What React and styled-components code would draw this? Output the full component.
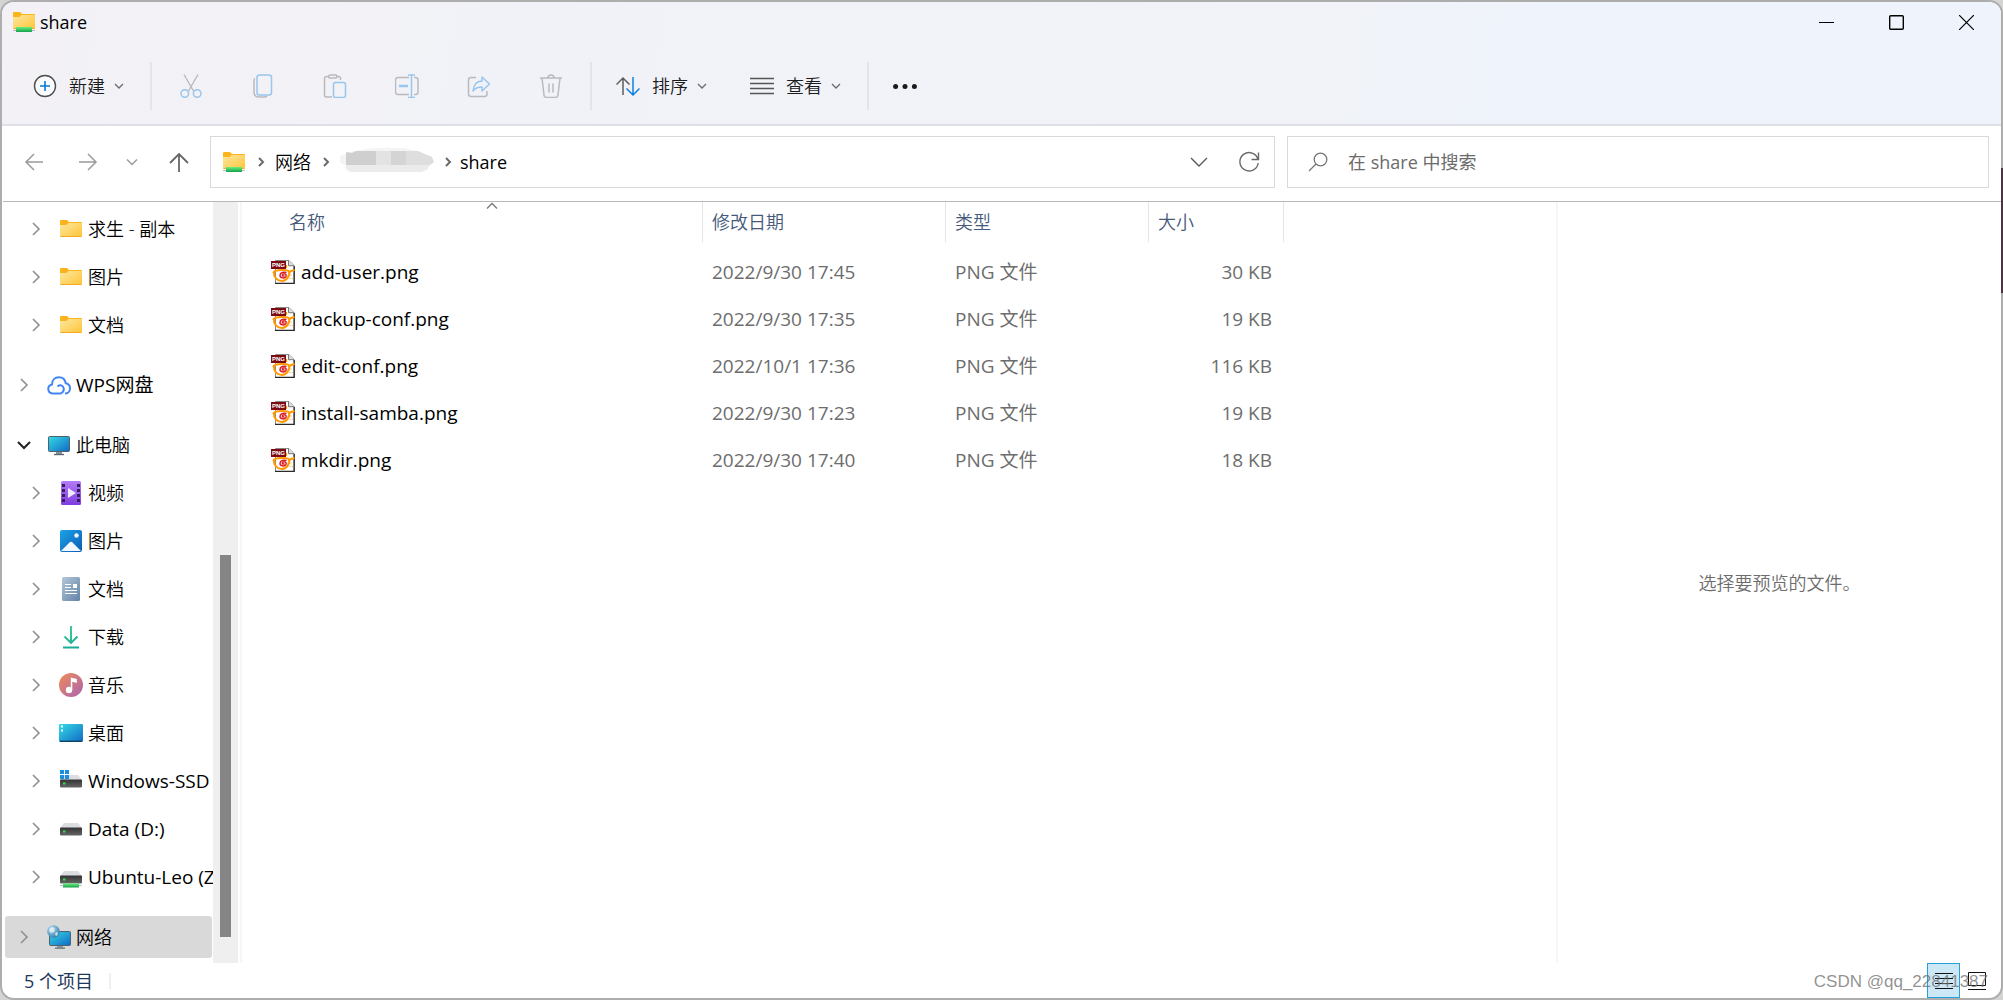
import React from "react";
import styled, { createGlobalStyle, css } from "styled-components";

const GlobalStyle = createGlobalStyle`
  *, *::before, *::after { box-sizing: border-box; }
  body {
    margin: 0;
    background: #d4d4d2;
    color: #000;
    font-family: "Open Sans", "Noto Sans CJK SC", sans-serif;
    font-size: 18px;
    line-height: 24px;
  }
  button, input { font: inherit; color: inherit; }
  ul, ol { list-style: none; margin: 0; padding: 0; }
  svg { display: block; flex: none; }
`;

const plainButton = css`
  display: flex;
  align-items: center;
  border: 0;
  padding: 0;
  background: transparent;
  white-space: nowrap;
  cursor: default;
`;

const Desktop = styled.div`
  position: relative;
`;

const Window = styled.div`
  position: relative;
  display: flex;
  flex-direction: column;
  min-height: 100vh;
  border: 2px solid #adadad;
  border-radius: 14px;
  background: #fff;
  overflow: hidden;
`;

const Chrome = styled.header`
  background: linear-gradient(100deg, #f3f1f6 0%, #f1f2f7 25%, #f1f3f8 65%, #eff3fb 76%);
  border-bottom: 2px solid #dfe0e6;
`;

const TitleBar = styled.div`
  display: flex;
  align-items: center;
  justify-content: space-between;
  height: 40px;
  padding-left: 10px;
`;

const Title = styled.h1`
  display: flex;
  align-items: center;
  gap: 4px;
  margin: 0;
  font-size: 18px;
  font-weight: 400;
`;

const WindowButtons = styled.div`
  display: flex;
  align-self: stretch;
`;

const WindowButton = styled.button`
  ${plainButton}
  width: 70px;
  justify-content: center;
`;

const Toolbar = styled.div`
  display: flex;
  align-items: center;
  height: 82px;
  padding: 6px 19px 0;
`;

const Command = styled.button`
  ${plainButton}
  height: 48px;
  padding: 0 12px;
  gap: 12px;
  color: #1b1b1b;
`;

const CommandLabel = styled.span`
  display: flex;
  align-items: center;
  gap: 7px;
  font-weight: 350;
`;

const IconGroup = styled.div`
  display: flex;
  gap: 24px;
  padding: 0 3px;
`;

const MenuGroup = styled.div`
  display: flex;
  gap: 17px;
`;

const IconCommand = styled.button`
  ${plainButton}
  width: 48px;
  height: 48px;
  justify-content: center;
`;

const Separator = styled.span`
  width: 2px;
  height: 48px;
  margin: 0 12px;
  background: #e3e3e9;
`;

const Navigation = styled.div`
  display: flex;
  align-items: center;
  height: 76px;
  margin-left: 1px;
  padding: 0 12px 3px 10px;
  border-bottom: 1px solid #b9b9b9;
`;

const History = styled.div`
  display: flex;
  gap: 12px;
  width: 197px;
`;

const HistoryButton = styled.button`
  ${plainButton}
  width: ${(p) => p.$width || 42}px;
  height: 42px;
  justify-content: center;
`;

const Address = styled.div`
  flex: 1;
  display: flex;
  align-items: center;
  justify-content: space-between;
  height: 52px;
  padding: 0 11px;
  border: 1px solid #d9d9d9;
`;

const Crumbs = styled.ol`
  display: flex;
  align-items: center;
`;

const Crumb = styled.li`
  display: flex;
  align-items: center;
`;

const CrumbButton = styled.button`
  ${plainButton}
  font-weight: 350;
`;

const CrumbText = styled(CrumbButton)`
  font-weight: 400;
`;

const CrumbArrow = styled.span`
  display: flex;
  justify-content: center;
  width: ${(p) => p.$width || 29}px;
`;

const AddressTools = styled.div`
  display: flex;
  gap: 22px;
`;

const AddressTool = styled.button`
  ${plainButton}
  width: 28px;
  height: 28px;
  justify-content: center;
`;

const Search = styled.label`
  display: flex;
  align-items: center;
  gap: 20px;
  flex: 0 1 702px;
  height: 52px;
  margin-left: 12px;
  padding: 0 20px;
  border: 1px solid #d9d9d9;
`;

const SearchInput = styled.input`
  flex: 1;
  min-width: 0;
  height: 30px;
  border: 0;
  padding: 0;
  outline: 0;
  background: transparent;
  font-weight: 400;
  &::placeholder { color: #6b6b6b; opacity: 1; }
`;

const Body = styled.div`
  flex: 1;
  display: grid;
  grid-template-columns: 211px 25px minmax(0, 1fr) minmax(200px, 445px);
`;

const Sidebar = styled.nav`
  padding: 3px 1px 1px 3px;
`;

const TreeItem = styled.li`
  padding: 3px 0;
  margin-top: ${(p) => (p.$root && !p.$first ? 12 : 0)}px;
`;

const TreeButton = styled.button`
  ${plainButton}
  width: 100%;
  height: 42px;
  padding-left: ${(p) => (p.$root ? 10 : 22)}px;
  border-radius: 3px;
  background: ${(p) => (p.$selected ? "#d9d9d9" : "transparent")};
  font-size: ${(p) => (p.$latin ? 19 : 18)}px;
  font-weight: ${(p) => (p.$latin ? 400 : 350)};
`;

const TreeIcon = styled.span`
  display: flex;
  margin: 0 5px 0 14px;
`;

const Track = styled.div`
  display: flex;
  flex-direction: column;
  justify-content: flex-end;
  padding: 0 7px 26px;
  background: #efefef;
`;

const Thumb = styled.div`
  width: 11px;
  height: 52%;
  background: #858585;
`;

const Files = styled.main`
  margin-left: 2px;
  border-left: 2px solid #f6f6f6;
`;

const Table = styled.table`
  border-spacing: 0;
  table-layout: fixed;
  width: 1042px;
  max-width: 100%;
`;

const HeadCell = styled.th`
  width: ${(p) => p.$width}px;
  padding: 0 0 6px;
  text-align: left;
  font-weight: 350;
  color: #45597a;
`;

const HeadBox = styled.div`
  position: relative;
  height: 40px;
  padding-left: ${(p) => p.$indent || 9}px;
  line-height: 40px;
  border-right: 1px solid #e5e5e5;
`;

const SortMark = styled.span`
  position: absolute;
  top: -2px;
  left: calc(50% + 14px);
`;

const Cell = styled.td`
  height: 47px;
  padding: 0 12px 0 9px;
  color: #6d6d6d;
  font-size: 19px;
  white-space: nowrap;
  text-align: ${(p) => (p.$end ? "right" : "left")};
`;

const NameCell = styled(Cell)`
  padding-left: 29px;
  color: #000;
`;

const FileName = styled.span`
  display: flex;
  align-items: center;
  gap: 6px;
`;

const Preview = styled.aside`
  display: flex;
  align-items: center;
  justify-content: center;
  border-left: 2px solid #f6f6f6;
  color: #6d6d6d;
  font-weight: 350;
`;

const StatusBar = styled.footer`
  display: flex;
  align-items: center;
  justify-content: space-between;
  height: 35px;
  padding: 0 8px 0 22px;
`;

const Count = styled.span`
  padding-right: 16px;
  border-right: 2px solid #efefef;
  line-height: 16px;
  color: #1e395b;
`;

const Views = styled.div`
  display: flex;
  align-self: stretch;
`;

const ViewButton = styled.button`
  ${plainButton}
  width: 33px;
  justify-content: center;
  border: 1px solid ${(p) => (p.$active ? "#26a0da" : "transparent")};
  background: ${(p) => (p.$active ? "#cce8f6" : "transparent")};
`;

const Watermark = styled.span`
  position: absolute;
  right: 13px;
  bottom: 4px;
  color: rgba(110, 110, 110, 0.75);
  font-family: "Liberation Sans", Arial, sans-serif;
  font-size: 17px;
  pointer-events: none;
`;

const DesktopEdge = styled.span`
  position: absolute;
  top: 16.8vh;
  right: 0;
  width: 2px;
  height: 12.5vh;
  background: #4a3540;
`;

/* ---------- icons ---------- */

const Svg = ({ w = 24, h = w, box, children, ...rest }) => (
  <svg width={w} height={h} viewBox={box || `0 0 ${w} ${h}`} fill="none" aria-hidden="true" {...rest}>
    {children}
  </svg>
);

const HiddenSvg = styled.svg`
  position: absolute;
`;

const Gradients = () => (
  <HiddenSvg width="0" height="0" aria-hidden="true">
    <defs>
      <linearGradient id="folder" x1="0" y1="0" x2="1" y2="1">
        <stop offset="0" stopColor="#fee7a1" />
        <stop offset="1" stopColor="#fdc536" />
      </linearGradient>
      <linearGradient id="screen" x1="0" y1="0" x2="1" y2="1">
        <stop offset="0" stopColor="#35dbe6" />
        <stop offset="1" stopColor="#1069c4" />
      </linearGradient>
      <linearGradient id="photo" x1="0" y1="0" x2="1" y2="1">
        <stop offset="0" stopColor="#1ba3e8" />
        <stop offset="1" stopColor="#0c5cb4" />
      </linearGradient>
      <linearGradient id="film" x1="0" y1="0" x2="0" y2="1">
        <stop offset="0" stopColor="#b57bf5" />
        <stop offset="1" stopColor="#7f3be0" />
      </linearGradient>
      <linearGradient id="paper" x1="0" y1="0" x2="1" y2="1">
        <stop offset="0" stopColor="#b4c8da" />
        <stop offset="1" stopColor="#6283a6" />
      </linearGradient>
      <linearGradient id="music" x1="0" y1="0" x2="1" y2="1">
        <stop offset="0" stopColor="#f28c55" />
        <stop offset="1" stopColor="#a863b4" />
      </linearGradient>
      <linearGradient id="green" x1="0" y1="0" x2="0" y2="1">
        <stop offset="0" stopColor="#6bf07c" />
        <stop offset="1" stopColor="#15a04c" />
      </linearGradient>
      <linearGradient id="down" gradientUnits="userSpaceOnUse" x1="4" y1="0" x2="20" y2="24">
        <stop offset="0" stopColor="#3fd08a" />
        <stop offset="1" stopColor="#0fa59a" />
      </linearGradient>
      <linearGradient id="drive" x1="0" y1="0" x2="0" y2="1">
        <stop offset="0" stopColor="#333" />
        <stop offset="1" stopColor="#666" />
      </linearGradient>
      <radialGradient id="globe" cx="0.35" cy="0.3" r="0.8">
        <stop offset="0" stopColor="#b9dff0" />
        <stop offset="1" stopColor="#2a77a8" />
      </radialGradient>
    </defs>
  </HiddenSvg>
);

const FolderShape = () => (
  <>
    <path d="M1 2a1 1 0 0 1 1-1h6l2 2h12a1 1 0 0 1 1 1v3H1z" fill="#fbb41a" />
    <path d="M1 6h6.500l2-2H22a1 1 0 0 1 1 1v12a1 1 0 0 1-1 1H2a1 1 0 0 1-1-1z" fill="url(#folder)" />
    <path d="M1.500 17.500h21" stroke="#f0ab22" />
  </>
);
const Folder = () => <Svg w={24} h={20}><FolderShape /></Svg>;
const SharedFolder = () => (
  <Svg w={24} h={22}>
    <FolderShape />
    <path d="M1 19.500h22" stroke="#b9b9bd" />
    <path d="M4 16h16v5H4z" fill="url(#green)" />
  </Svg>
);

const Chevron = ({ dir = "down", w = 14, color = "#6a6a6a", size = 4, sw = 1.3 }) => {
  const c = w / 2;
  const s = size;
  const d = {
    down: `M${c - s} ${c - s / 2}l${s} ${s} ${s} ${-s}`,
    up: `M${c - s} ${c + s / 2}l${s} ${-s} ${s} ${s}`,
    right: `M${c - s / 2} ${c - s}l${s} ${s} ${-s} ${s}`,
  }[dir];
  return <Svg w={w}><path d={d} stroke={color} strokeWidth={sw} /></Svg>;
};

const NewIcon = () => (
  <Svg>
    <circle cx="12" cy="12" r="10.500" fill="#f9fafc" stroke="#4e4e4e" strokeWidth="1.400" />
    <path d="M12 7v10M7 12h10" stroke="#0a78d4" strokeWidth="1.600" />
  </Svg>
);
const G = "#b9b9be";
const B = "#98c6ec";
const CutIcon = () => (
  <Svg>
    <path d="M5 0.500l9.500 16.500M19 0.500L9.500 17" stroke={G} strokeWidth="1.400" />
    <circle cx="5.800" cy="19.500" r="3.800" stroke={B} strokeWidth="1.500" />
    <circle cx="18.200" cy="19.500" r="3.800" stroke={B} strokeWidth="1.500" />
  </Svg>
);
const CopyIcon = () => (
  <Svg>
    <path d="M4 4.500C3 5 3 6 3 7v11c0 3.500 1.500 5 5 5h5c1.500 0 2.500-.3 3-1" stroke={G} strokeWidth="1.500" />
    <rect x="6" y="1" width="14.500" height="20" rx="2.500" stroke={B} strokeWidth="1.500" />
  </Svg>
);
const PasteIcon = () => (
  <Svg>
    <path d="M6 2.500H3.500a2 2 0 0 0-2 2V21a2 2 0 0 0 2 2H9M13 2.500h2.500a2 2 0 0 1 2 2V6" stroke={G} strokeWidth="1.500" />
    <rect x="5.500" y="1" width="8.500" height="3" rx="1.500" stroke={G} strokeWidth="1.400" />
    <rect x="10.500" y="8.500" width="12" height="15" rx="2" stroke={B} strokeWidth="1.500" />
  </Svg>
);
const RenameIcon = () => (
  <Svg>
    <path d="M14 3.500H3a2.500 2.500 0 0 0-2.500 2.500v12A2.500 2.500 0 0 0 3 20.500h11M19 3.500h1.500A2.500 2.500 0 0 1 23 6v12a2.500 2.500 0 0 1-2.500 2.500H19" stroke={G} strokeWidth="1.500" />
    <path d="M4 12h9" stroke={B} strokeWidth="2.400" />
    <path d="M16.500 1v22.500M13 1h7M13 23.500h7" stroke={B} strokeWidth="1.500" />
  </Svg>
);
const ShareIcon = () => (
  <Svg>
    <path d="M9 3.500H4A2.500 2.500 0 0 0 1.500 6v14A2.500 2.500 0 0 0 4 22.500h13.500A2.500 2.500 0 0 0 20 20v-3" stroke={G} strokeWidth="1.500" />
    <path d="M15 3l7.500 7-7.500 7v-4c-4.500 0-7 1.200-9 4C6.500 11 9.500 7.300 15 7z" stroke={B} strokeWidth="1.500" strokeLinejoin="round" />
  </Svg>
);
const TrashIcon = () => (
  <Svg>
    <path d="M1 4h22M9 4c0-4 6-4 6 0M3 4l2 17a2.500 2.500 0 0 0 2.500 2.500h9A2.500 2.500 0 0 0 19 21l2-17M10 9.500v9M14 9.500v9" stroke={G} strokeWidth="1.500" />
  </Svg>
);
const SortIcon = () => (
  <Svg>
    <path d="M7 21V4M.5 10.500L7 4l6.500 6.500" stroke="#5c5c5c" strokeWidth="1.500" />
    <path d="M17 3v18M10.500 14.500L17 21l6.500-6.500" stroke="#0f7fdc" strokeWidth="1.500" />
  </Svg>
);
const ViewIcon = () => (
  <Svg>
    <path d="M0 4.500h24M0 9.500h24M0 14.500h24M0 19.500h24" stroke="#555" strokeWidth="1.300" />
  </Svg>
);
const MoreIcon = () => (
  <Svg>
    <g fill="#1b1b1b">
      <circle cx="2.600" cy="12.500" r="2.500" />
      <circle cx="12" cy="12.500" r="2.500" />
      <circle cx="21.400" cy="12.500" r="2.500" />
    </g>
  </Svg>
);
const ArrowLeft = () => <Svg w={20}><path d="M19 10H2M10 2L2 10l8 8" stroke="#9b9b9b" strokeWidth="1.500" /></Svg>;
const ArrowRight = () => <Svg w={20}><path d="M1 10h17M10 2l8 8-8 8" stroke="#9b9b9b" strokeWidth="1.500" /></Svg>;
const ArrowUp = () => <Svg w={20}><path d="M10 20V2M1 11l9-9 9 9" stroke="#666" strokeWidth="1.800" /></Svg>;
const RefreshIcon = () => (
  <Svg w={22}>
    <path d="M20 8.500A9.200 9.200 0 1 0 20.200 12M20.500 1.500v7h-7" stroke="#6a6a6a" strokeWidth="1.400" />
  </Svg>
);
const SearchIcon = () => (
  <Svg w={20}>
    <circle cx="12.500" cy="7.500" r="6.300" stroke="#777" strokeWidth="1.300" />
    <path d="M8 12L1 19" stroke="#777" strokeWidth="1.300" />
  </Svg>
);

const CloudIcon = () => (
  <Svg>
    <path d="M14 20.500H5.500a4.600 4.600 0 0 1-.5-9.100C5 7 8 4.200 11.800 4.200c3.600 0 6.400 2.400 6.900 6 2.600.5 4.300 2.500 4.300 5 0 3-2.200 5.300-5 5.300" stroke="#4285f4" strokeWidth="2" />
    <path d="M10.500 13.500c3-2.500 6.300-.8 6.300 2.500 0 2-1 3.500-2.800 4.500" stroke="#4285f4" strokeWidth="2" />
  </Svg>
);
const PcIcon = () => (
  <Svg>
    <rect x="1.500" y="3.500" width="21" height="15" rx="1" fill="url(#screen)" stroke="#52606c" />
    <path d="M9 19h6v2H9z" fill="#8c959e" />
    <path d="M7 21.500h10" stroke="#5b6670" strokeWidth="1.400" />
  </Svg>
);
const FilmIcon = () => (
  <Svg>
    <rect x="2" width="20" height="24" rx="1.500" fill="url(#film)" />
    <path d="M4.500 3v19M19.500 3v19" stroke="#33215e" strokeWidth="3" strokeDasharray="3 2" />
    <path d="M9 7l8 5-8 5z" fill="#f1eafc" />
  </Svg>
);
const PhotoIcon = () => (
  <Svg>
    <rect x="1" y="1" width="22" height="22" rx="2" fill="url(#photo)" />
    <path d="M2 22l8.500-8.500c1-1 2-1 3 0L22 22z" fill="#f2f8fe" />
    <circle cx="17.500" cy="6.500" r="2.200" fill="#f2f8fe" />
  </Svg>
);
const PaperIcon = () => (
  <Svg>
    <rect x="3" width="18" height="24" rx="1.500" fill="url(#paper)" />
    <path d="M6 7.500h6M6 10.500h6M6 13.500h12M6 16.500h12" stroke="#fff" strokeWidth="1.100" />
    <path d="M14 7h4v4h-4z" fill="#fff" />
  </Svg>
);
const DownIcon = () => (
  <Svg>
    <path d="M12 1v17M5.500 11.500L12 18l6.500-6.500M4 22.500h16" stroke="url(#down)" strokeWidth="1.900" />
  </Svg>
);
const MusicIcon = () => (
  <Svg>
    <circle cx="12" cy="12" r="12" fill="url(#music)" />
    <circle cx="10" cy="17" r="3.200" fill="#fff" />
    <path d="M11.800 17V4.500l6 1.500v4l-4.500-1.200V17z" fill="#fff" />
  </Svg>
);
const DesktopIcon = () => (
  <Svg>
    <rect y="3" width="24" height="18" rx="1.200" fill="url(#screen)" />
    <path d="M2 5.500h2M2 9.500h2" stroke="#e6fbff" strokeWidth="1.800" />
    <path d="M1 20.300h22" stroke="#123f66" strokeWidth="1.400" />
  </Svg>
);
const DriveShape = () => (
  <>
    <path d="M5 6h14l4 5H1z" fill="#dcdde1" />
    <rect x="1" y="10.500" width="22" height="8" rx="1" fill="url(#drive)" />
    <path d="M4 13.500h2.500v2H4z" fill="#2fe04a" />
  </>
);
const WinDriveIcon = () => (
  <Svg>
    <DriveShape />
    <path d="M1 1h4v4H1zM6 1h4v4H6zM1 6h4v4H1zM6 6h4v4H6z" fill="#1a8fe0" />
  </Svg>
);
const DriveIcon = () => <Svg><DriveShape /></Svg>;
const NetDriveIcon = () => (
  <Svg>
    <DriveShape />
    <path d="M1 20.500h22" stroke="#bdbdbd" />
    <path d="M4 18.500h16V22.500H4z" fill="url(#green)" />
  </Svg>
);
const NetworkIcon = () => (
  <Svg>
    <rect x="2.500" y="6.500" width="21" height="14" rx="1" fill="url(#screen)" stroke="#52606c" />
    <path d="M10 21h6v1.500h-6z" fill="#8c959e" />
    <path d="M8 23.200h10" stroke="#5b6670" strokeWidth="1.300" />
    <circle cx="6.500" cy="6.500" r="6.300" fill="url(#globe)" />
    <path d="M3 3l3-1 2 2-1 3-3 1-2-2zM9 7l2 1-1 3-2-1z" fill="#e5f3f6" opacity=".8" />
  </Svg>
);
const PngIcon = () => (
  <Svg>
    <path d="M4.500.5H18l5 5v18H4.500z" fill="#fff" stroke="#8a8a8a" />
    <path d="M23.200 6v17.500H4" stroke="#2a2a2a" strokeWidth="1.300" />
    <path d="M17.500.5v5.200H23" fill="#ddd" stroke="#777" />
    <path d="M3 12c1-2.200 14-2.800 15-.5 1.300 3-2 9.500-7 9.500S2.500 17 3 12z" stroke="#ff9900" strokeWidth="2" />
    <path d="M2 11.500l2 2M18 12l5.500-2.200M15 8V5" stroke="#ff9900" strokeWidth="2.200" />
    <path d="M20 14.500v1M19 18v1M21.500 18v1" stroke="#ffb84d" strokeWidth="1.300" />
    <path d="M15.500 12.500c-3-.8-6.500 0-6.500 3 0 2.500 4.500 3.500 6 .8 1-2-1.500-3-3-2.200-1.500 1 0 2.500 1.500 1.500" stroke="#dc1e28" strokeWidth="1.500" />
    <rect y="1" width="15" height="8" fill="#7c0a10" />
    <text x="7.500" y="7.300" textAnchor="middle" fill="#fff" fontFamily="Liberation Sans" fontWeight="700" fontSize="6">PNG</text>
  </Svg>
);

/* Pixelated smear hiding the host name in the address bar. */
const Redacted = () => (
  <Svg w={96} h={30} box="6 3 96 30" role="img" aria-label="已隐藏的主机名">
    <path d="M6 12c12-5 20-7 40-8 18-1 30 0 38 4 6 3 14 6 12 12-2 6-8 7-20 8H16c-4-1-5-4-5-7-4-1-8-5-5-9z" fill="#f4f4f4" />
    <path d="M12 8l6 1 4-2h20v14H12z" fill="#cfcfcf" />
    <path d="M42 7h15v14H42z" fill="#e3e3e3" />
    <path d="M57 7h15v14H57z" fill="#d4d4d4" />
    <path d="M72 7h12l14 6 2 5-4 3H72z" fill="#dedede" />
    <path d="M12 21h84l-3 5-6 2H17l-5-4z" fill="#ebebeb" />
  </Svg>
);

/* ---------- data ---------- */

const tree = [
  { label: "求生 - 副本", Icon: Folder },
  { label: "图片", Icon: Folder },
  { label: "文档", Icon: Folder },
  { label: "WPS网盘", Icon: CloudIcon, root: true, latin: true },
  { label: "此电脑", Icon: PcIcon, root: true, open: true },
  { label: "视频", Icon: FilmIcon },
  { label: "图片", Icon: PhotoIcon },
  { label: "文档", Icon: PaperIcon },
  { label: "下载", Icon: DownIcon },
  { label: "音乐", Icon: MusicIcon },
  { label: "桌面", Icon: DesktopIcon },
  { label: "Windows-SSD", Icon: WinDriveIcon, latin: true },
  { label: "Data (D:)", Icon: DriveIcon, latin: true },
  { label: "Ubuntu-Leo (Z", Icon: NetDriveIcon, latin: true },
  { label: "网络", Icon: NetworkIcon, root: true, selected: true },
];

const files = [
  ["add-user.png", "2022/9/30 17:45", "30 KB"],
  ["backup-conf.png", "2022/9/30 17:35", "19 KB"],
  ["edit-conf.png", "2022/10/1 17:36", "116 KB"],
  ["install-samba.png", "2022/9/30 17:23", "19 KB"],
  ["mkdir.png", "2022/9/30 17:40", "18 KB"],
];

const editCommands = [
  ["剪切", CutIcon],
  ["复制", CopyIcon],
  ["粘贴", PasteIcon],
  ["重命名", RenameIcon],
  ["共享", ShareIcon],
  ["删除", TrashIcon],
];

const MenuCommand = ({ label, Icon }) => (
  <Command type="button">
    <Icon />
    <CommandLabel>
      {label}
      <Chevron />
    </CommandLabel>
  </Command>
);

export default function App() {
  return (
    <Desktop>
      <GlobalStyle />
      <Gradients />
      <Window>
        <Chrome>
          <TitleBar>
            <Title>
              <SharedFolder />
              share
            </Title>
            <WindowButtons>
              <WindowButton type="button" aria-label="最小化">
                <Svg w={15}><path d="M0 7.500h15" stroke="#000" /></Svg>
              </WindowButton>
              <WindowButton type="button" aria-label="最大化">
                <Svg w={15}><rect x="0.700" y="0.700" width="13.600" height="13.600" rx="1" stroke="#000" strokeWidth="1.400" /></Svg>
              </WindowButton>
              <WindowButton type="button" aria-label="关闭">
                <Svg w={15}><path d="M0 0l15 15M15 0L0 15" stroke="#000" strokeWidth="1.200" /></Svg>
              </WindowButton>
            </WindowButtons>
          </TitleBar>
          <Toolbar>
            <MenuCommand label="新建" Icon={NewIcon} />
            <Separator />
            <IconGroup>
              {editCommands.map(([name, Icon]) => (
                <IconCommand key={name} type="button" aria-label={name}>
                  <Icon />
                </IconCommand>
              ))}
            </IconGroup>
            <Separator />
            <MenuGroup>
              <MenuCommand label="排序" Icon={SortIcon} />
              <MenuCommand label="查看" Icon={ViewIcon} />
            </MenuGroup>
            <Separator />
            <IconCommand type="button" aria-label="查看更多">
              <MoreIcon />
            </IconCommand>
          </Toolbar>
        </Chrome>

        <Navigation>
          <History>
            <HistoryButton type="button" aria-label="后退"><ArrowLeft /></HistoryButton>
            <HistoryButton type="button" aria-label="前进"><ArrowRight /></HistoryButton>
            <HistoryButton type="button" aria-label="最近位置" $width={22}>
              <Chevron color="#9b9b9b" size={5} sw={1.5} />
            </HistoryButton>
            <HistoryButton type="button" aria-label="上移" $width={48}><ArrowUp /></HistoryButton>
          </History>
          <Address>
            <Crumbs>
              <Crumb>
                <SharedFolder />
                <CrumbArrow><Chevron dir="right" size={4} sw={2} /></CrumbArrow>
                <CrumbButton type="button">网络</CrumbButton>
                <CrumbArrow><Chevron dir="right" size={4} sw={2} /></CrumbArrow>
              </Crumb>
              <Crumb>
                <Redacted />
                <CrumbArrow $width={24}><Chevron dir="right" size={4} sw={2} /></CrumbArrow>
              </Crumb>
              <Crumb>
                <CrumbText type="button">share</CrumbText>
              </Crumb>
            </Crumbs>
            <AddressTools>
              <AddressTool type="button" aria-label="以前的位置">
                <Chevron w={20} size={8} color="#5a5a5a" sw={1.4} />
              </AddressTool>
              <AddressTool type="button" aria-label="刷新"><RefreshIcon /></AddressTool>
            </AddressTools>
          </Address>
          <Search>
            <SearchIcon />
            <SearchInput type="search" aria-label="搜索" placeholder="在 share 中搜索" />
          </Search>
        </Navigation>

        <Body>
          <Sidebar aria-label="导航窗格">
            <ul>
              {tree.map(({ label, Icon, root, open, selected, latin }, i) => (
                <TreeItem key={i} $root={root} $first={i === 0}>
                  <TreeButton type="button" $root={root} $selected={selected} $latin={latin}>
                    <Chevron
                      dir={open ? "down" : "right"}
                      w={18}
                      size={6}
                      color={open ? "#222" : "#8f8f8f"}
                      sw={open ? 2 : 1.6}
                    />
                    <TreeIcon><Icon /></TreeIcon>
                    {label}
                  </TreeButton>
                </TreeItem>
              ))}
            </ul>
          </Sidebar>
          <Track><Thumb /></Track>
          <Files>
            <Table>
              <thead>
                <tr>
                  <HeadCell $width={461} scope="col">
                    <HeadBox $indent={47}>
                      名称
                      <SortMark><Chevron dir="up" w={12} size={5} color="#777" /></SortMark>
                    </HeadBox>
                  </HeadCell>
                  <HeadCell $width={243} scope="col"><HeadBox>修改日期</HeadBox></HeadCell>
                  <HeadCell $width={203} scope="col"><HeadBox>类型</HeadBox></HeadCell>
                  <HeadCell $width={135} scope="col"><HeadBox>大小</HeadBox></HeadCell>
                </tr>
              </thead>
              <tbody>
                {files.map(([name, date, size]) => (
                  <tr key={name}>
                    <NameCell>
                      <FileName><PngIcon />{name}</FileName>
                    </NameCell>
                    <Cell>{date}</Cell>
                    <Cell>PNG 文件</Cell>
                    <Cell $end>{size}</Cell>
                  </tr>
                ))}
              </tbody>
            </Table>
          </Files>
          <Preview>选择要预览的文件。</Preview>
        </Body>

        <StatusBar>
          <Count>5 个项目</Count>
          <Views>
            <ViewButton type="button" aria-label="详细信息" $active>
              <Svg w={20} h={18}><path d="M1 1.500h18M1 6.500h18M1 11.500h18M1 16.500h18" stroke="#111" /></Svg>
            </ViewButton>
            <ViewButton type="button" aria-label="大图标">
              <Svg w={20} h={20}><path d="M1.500 1.500h17v13h-17zM1 18.500h18" stroke="#111" /></Svg>
            </ViewButton>
          </Views>
        </StatusBar>
        <Watermark>CSDN @qq_22841387</Watermark>
      </Window>
      <DesktopEdge />
    </Desktop>
  );
}
